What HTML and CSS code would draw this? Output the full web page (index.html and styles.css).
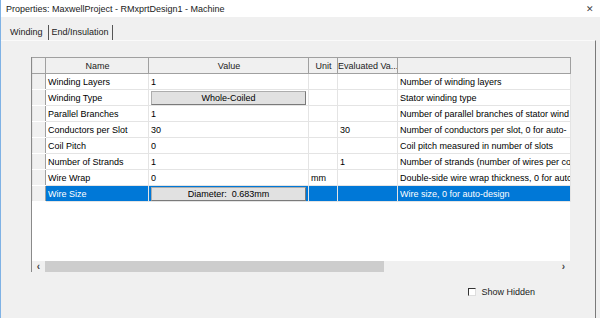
FILE: index.html
```html
<!DOCTYPE html>
<html lang="en">

<head>
  <meta charset="UTF-8" />
  <title>Properties: MaxwellProject - RMxprtDesign1 - Machine</title>
  <link rel="stylesheet" href="styles.css">
</head>

<body>
  <div class="window">
    <div class="titlebar">
      <span>Properties: MaxwellProject - RMxprtDesign1 - Machine</span>
      <span class="close">&#x2715;</span>
    </div>

    <div class="tabs">
      <div class="tab active">Winding</div>
      <div class="tab">End/Insulation</div>
    </div>

    <div class="pane">
      <div class="grid">
        <table class="props">
          <colgroup>
            <col class="c-head" />
            <col class="c-name" />
            <col class="c-value" />
            <col class="c-unit" />
            <col class="c-eval" />
            <col class="c-desc" />
          </colgroup>
          <thead>
            <tr>
              <th></th>
              <th>Name</th>
              <th>Value</th>
              <th>Unit</th>
              <th class="left">Evaluated Va...</th>
              <th></th>
            </tr>
          </thead>
          <tbody>
            <tr>
              <td class="rowhead"></td>
              <td>Winding Layers</td>
              <td>1</td>
              <td></td>
              <td></td>
              <td>Number of winding layers</td>
            </tr>
            <tr>
              <td class="rowhead"></td>
              <td>Winding Type</td>
              <td class="btn-cell"><div class="cell-btn">Whole-Coiled</div></td>
              <td></td>
              <td></td>
              <td>Stator winding type</td>
            </tr>
            <tr>
              <td class="rowhead"></td>
              <td>Parallel Branches</td>
              <td>1</td>
              <td></td>
              <td></td>
              <td>Number of parallel branches of stator wind</td>
            </tr>
            <tr>
              <td class="rowhead"></td>
              <td>Conductors per Slot</td>
              <td>30</td>
              <td></td>
              <td>30</td>
              <td>Number of conductors per slot, 0 for auto-</td>
            </tr>
            <tr>
              <td class="rowhead"></td>
              <td>Coil Pitch</td>
              <td>0</td>
              <td></td>
              <td></td>
              <td>Coil pitch measured in number of slots</td>
            </tr>
            <tr>
              <td class="rowhead"></td>
              <td>Number of Strands</td>
              <td>1</td>
              <td></td>
              <td>1</td>
              <td>Number of strands (number of wires per co</td>
            </tr>
            <tr>
              <td class="rowhead"></td>
              <td>Wire Wrap</td>
              <td>0</td>
              <td>mm</td>
              <td></td>
              <td>Double-side wire wrap thickness, 0 for autc</td>
            </tr>
            <tr class="selected">
              <td class="rowhead"></td>
              <td>Wire Size</td>
              <td class="btn-cell"><div class="cell-btn">Diameter:&nbsp; 0.683mm</div></td>
              <td></td>
              <td></td>
              <td>Wire size, 0 for auto-design</td>
            </tr>
          </tbody>
        </table>

        <div class="scrollbar">
          <span class="arrow">&lsaquo;</span>
          <div class="track">
            <div class="thumb"></div>
          </div>
          <span class="arrow">&rsaquo;</span>
        </div>
      </div>

      <div class="footer">
        <label class="check">
          <span class="box"></span>
          Show Hidden
        </label>
      </div>
    </div>
  </div>
</body>

</html>
```

FILE: styles.css
```css
* {
  margin: 0;
  padding: 0;
  box-sizing: border-box;
  font-family: 'Liberation Sans', Arial, sans-serif;
}

body {
  width: 600px;
  height: 318px;
  overflow: hidden;
  background: #f0f0f0;
  font-size: 9px;
  color: #000;
}

.window {
  height: 318px;
  display: flex;
  flex-direction: column;
  border-left: 1px solid #7fb2e5;
}

.titlebar {
  height: 17px;
  background: #fff;
  display: flex;
  align-items: center;
  justify-content: space-between;
  padding: 0 6px 0 5px;
  color: #1a1a1a;
}

.close {
  font-size: 9px;
  color: #444;
}

.tabs {
  height: 23px;
  display: flex;
  align-items: center;
  padding: 7px 0 0 7px;
}

.tab {
  height: 15px;
  line-height: 15px;
  padding: 0 3px 0 3px;
  border-right: 1px solid #555;
  color: #222;
}

.tab.active {
  padding: 0 5px 0 2px;
}

.pane {
  flex: 1;
  margin-right: 4px;
  border-top: 1px solid #fafafa;
  border-right: 1px solid #7a7a7a;
  padding: 16px 0 0 30px;
  display: flex;
  flex-direction: column;
}

.grid {
  width: 539px;
  height: 215px;
  background: #fff;
  border-left: 1px solid #8a8a8a;
  display: flex;
  flex-direction: column;
  justify-content: space-between;
}

.props {
  border-collapse: collapse;
  table-layout: fixed;
  width: 538px;
}

.c-head { width: 13px; }
.c-name { width: 103px; }
.c-value { width: 160px; }
.c-unit { width: 29px; }
.c-eval { width: 60px; }
.c-desc { width: 173px; }

.props th,
.props td {
  height: 16px;
  padding: 0 1px 0 2px;
  white-space: nowrap;
  overflow: hidden;
  font-weight: normal;
  text-align: left;
  border: 1px solid #e4e4e4;
}

.props th {
  background: #f0f0f0;
  text-align: center;
  border-top: 1px solid #a0a0a0;
  border-bottom: 1px solid #a0a0a0;
  border-right: 1px solid #a0a0a0;
  color: #222;
}

.props th.left {
  text-align: left;
  padding: 0;
}

.props td.rowhead {
  background: #f0f0f0;
  border-right: 1px solid #a0a0a0;
  border-bottom: 1px solid #fff;
}

.props td.btn-cell {
  padding: 0 2px;
}

.cell-btn {
  height: 14px;
  line-height: 12px;
  text-align: center;
  background: #e1e1e1;
  border: 1px solid #adadad;
  border-right-color: #7a7a7a;
  border-bottom-color: #7a7a7a;
  color: #000;
}

.selected td {
  background: #0078d7;
  color: #fff;
}

.selected td.rowhead {
  background: #f0f0f0;
}

.scrollbar {
  height: 11px;
  display: flex;
  align-items: center;
  background: #f0f0f0;
}

.arrow {
  width: 13px;
  text-align: center;
  font-size: 10px;
  font-weight: bold;
  line-height: 11px;
  color: #444;
}

.track {
  flex: 1;
  height: 11px;
}

.thumb {
  width: 339px;
  height: 11px;
  background: #cdcdcd;
}

.footer {
  display: flex;
  justify-content: flex-end;
  padding: 15px 60px 0 0;
}

.check {
  display: flex;
  align-items: center;
  gap: 5px;
  color: #222;
}

.box {
  width: 8px;
  height: 8px;
  border-top: 1px solid #333;
  border-left: 1px solid #333;
  border-right: 1px solid #ddd;
  border-bottom: 1px solid #ddd;
  background: #fff;
}
```
